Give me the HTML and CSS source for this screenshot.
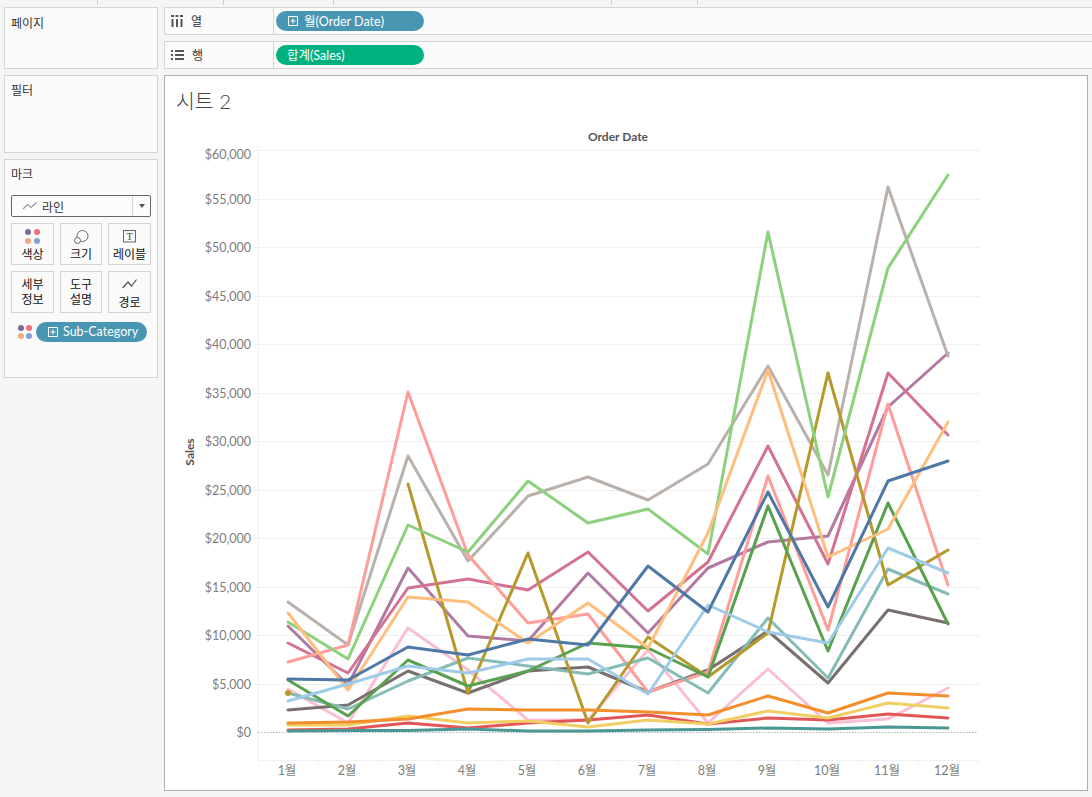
FILE: index.html
```html
<!DOCTYPE html>
<html lang="ko">
<head>
<meta charset="utf-8">
<title>시트 2</title>
<link rel="stylesheet" href="styles.css">
</head>
<body>
<div class="topstrip">
  <i class="t1"></i><i class="t2"></i><i class="t3"></i><i class="t4"></i><i class="t5"></i>
</div>
<div class="app">
  <aside class="side">
    <section class="card pages"><h2>페이지</h2></section>
    <section class="card filters"><h2>필터</h2></section>
    <section class="card marks">
      <h2>마크</h2>
      <div class="dropdown">
        <div class="dd-main">
          <svg class="dd-icon" width="16" height="10" viewBox="0 0 16 10"><path d="M1 8 L5.500 3.500 L9 6.500 L14.500 1.500"/></svg>
          <span>라인</span>
        </div>
        <div class="dd-arrow"><b></b></div>
      </div>
      <div class="tiles">
        <div class="tile">
          <svg class="tile-icon" width="18" height="18" viewBox="0 0 18 18">
            <circle class="d1" cx="4" cy="4" r="3"/><circle class="d2" cx="13" cy="4" r="3"/>
            <circle class="d3" cx="4" cy="13" r="3"/><circle class="d4" cx="13" cy="13" r="3"/>
          </svg>
          <span>색상</span>
        </div>
        <div class="tile">
          <svg class="tile-icon line" width="18" height="18" viewBox="0 0 18 18">
            <circle cx="10.500" cy="8" r="5.500"/><circle class="small" cx="5.500" cy="12.500" r="3"/>
          </svg>
          <span>크기</span>
        </div>
        <div class="tile">
          <svg class="tile-icon line" width="18" height="18" viewBox="0 0 18 18">
            <rect x="2.500" y="2.500" width="12" height="11.500"/>
            <text class="t-glyph" x="8.500" y="12" text-anchor="middle">T</text>
          </svg>
          <span>레이블</span>
        </div>
        <div class="tile two"><span>세부<br>정보</span></div>
        <div class="tile two"><span>도구<br>설명</span></div>
        <div class="tile">
          <svg class="tile-icon path" width="18" height="18" viewBox="0 0 18 18"><path d="M1.500 12 L7 6 L10.500 10 L15.500 3.500"/></svg>
          <span>경로</span>
        </div>
      </div>
      <div class="color-row">
        <svg class="row-dots" width="14" height="14" viewBox="0 0 14 14">
          <circle class="d1" cx="3" cy="3" r="3"/><circle class="d2" cx="11" cy="3" r="3"/>
          <circle class="d3" cx="3" cy="11" r="3"/><circle class="d4" cx="11" cy="11" r="3"/>
        </svg>
        <div class="pill blue wide">
          <svg class="plus" width="11" height="11" viewBox="0 0 11 11"><path d="M.5 .5H9.500V9.500H.5Z M5 2.500V7.500 M2.500 5H7.500"/></svg>
          <span>Sub-Category</span>
        </div>
      </div>
    </section>
  </aside>
  <main class="content">
    <div class="shelf">
      <div class="shelf-head">
        <svg class="shelf-icon" width="12" height="12" viewBox="0 0 12 12"><path d="M0 0H3V2H0Z M4.500 0H7.500V2H4.500Z M9 0H12V2H9Z M.5 4H2.500V12H.5Z M5 4H7V12H5Z M9.500 4H11.500V12H9.500Z"/></svg>
        <span>열</span>
      </div>
      <div class="pill blue">
        <svg class="plus" width="11" height="11" viewBox="0 0 11 11"><path d="M.5 .5H9.500V9.500H.5Z M5 2.500V7.500 M2.500 5H7.500"/></svg>
        <span>월(Order Date)</span>
      </div>
    </div>
    <div class="shelf">
      <div class="shelf-head">
        <svg class="shelf-icon" width="13" height="12" viewBox="0 0 13 12"><path d="M0 1H2V3H0Z M4 1H13V3H4Z M0 5H2V7H0Z M4 5H13V7H4Z M0 9H2V11H0Z M4 9H13V11H4Z"/></svg>
        <span>행</span>
      </div>
      <div class="pill green"><span>합계(Sales)</span></div>
    </div>
    <section class="viz">
      <h1>시트 2</h1>
      <svg class="chart" width="922" height="664" viewBox="165 126 922 664">
        <g class="grid">
          <path d="M258 146V760 M254 150.500H980 M254 199.500H980 M254 247.500H980 M254 296.500H980 M254 344.500H980 M254 393.500H980 M254 441.500H980 M254 490.500H980 M254 538.500H980 M254 587.500H980 M254 635.500H980 M254 684.500H980 M258 760.500H978 M258.500 760V764 M318.500 760V764 M378.500 760V764 M438.500 760V764 M498.500 760V764 M558.500 760V764 M618.500 760V764 M678.500 760V764 M738.500 760V764 M798.500 760V764 M858.500 760V764 M918.500 760V764 M978.500 760V764"/>
        </g>
        <path class="zero" d="M258 732.500H978"/>
        <text class="head" x="618" y="141" text-anchor="middle">Order Date</text>
        <text class="head" transform="translate(194 452) rotate(-90)" text-anchor="middle">Sales</text>
        <g class="yaxis" text-anchor="end">
          <text x="251" y="159">$60,000</text><text x="251" y="204">$55,000</text><text x="251" y="252">$50,000</text><text x="251" y="301">$45,000</text><text x="251" y="349">$40,000</text><text x="251" y="398">$35,000</text><text x="251" y="446">$30,000</text><text x="251" y="495">$25,000</text><text x="251" y="543">$20,000</text><text x="251" y="592">$15,000</text><text x="251" y="640">$10,000</text><text x="251" y="689">$5,000</text><text x="251" y="737">$0</text>
        </g>
        <g class="xaxis" text-anchor="middle">
          <text x="287" y="775">1월</text><text x="347" y="775">2월</text><text x="407" y="775">3월</text><text x="467" y="775">4월</text><text x="527" y="775">5월</text><text x="587" y="775">6월</text><text x="647" y="775">7월</text><text x="707" y="775">8월</text><text x="767" y="775">9월</text><text x="827" y="775">10월</text><text x="887" y="775">11월</text><text x="947" y="775">12월</text>
        </g>
        <g class="lines">
          <polyline class="s-purple" points="288,626 348,685 408,568 468,636 528,641 588,573 648,633 708,568 768,542 828,536 888,407 948,353"/>
          <polyline class="s-pink" points="288,689 348,723 408,628 468,670 528,720 588,720 648,650 708,723 768,669 828,723 888,719 948,688"/>
          <polyline class="s-rose" points="288,643 348,673 408,588 468,579 528,590 588,552 648,611 708,562 768,446 828,564 888,373 948,435"/>
          <polyline class="s-lgray" points="288,602 348,645 408,456 468,561 528,496 588,477 648,500 708,464 768,366 828,475 888,187 948,356"/>
          <polyline class="s-gray" points="288,710 348,705 408,671 468,693 528,671 588,667 648,692 708,670 768,631 828,683 888,610 948,623"/>
          <polyline class="s-lred" points="288,662 348,645 408,392 468,555 528,623 588,614 648,692 708,672 768,476 828,630 888,404 948,585"/>
          <polyline class="s-red" points="288,730 348,729 408,723 468,728 528,723 588,720 648,715 708,724 768,718 828,720 888,714 948,718"/>
          <polyline class="s-lteal" points="288,693 348,709 408,681 468,658 528,666 588,674 648,658 708,693 768,618 828,678 888,569 948,594"/>
          <polyline class="s-teal" points="288,731 348,730.500 408,730.500 468,729 528,731 588,731 648,730 708,729.500 768,728 828,729 888,727 948,728"/>
          <polyline class="s-yellow" points="288,725 348,725 408,716 468,723 528,721 588,727 648,720 708,724 768,711 828,718 888,703 948,708"/>
          <circle class="s-dot" cx="288" cy="693" r="3"/>
          <polyline class="s-olive" points="408,484 468,693 528,553 588,723 648,637 708,677 768,633 828,373 888,585 948,550"/>
          <polyline class="s-lgreen" points="288,622 348,659 408,525 468,552 528,481 588,523 648,509 708,554 768,232 828,497 888,268 948,175"/>
          <polyline class="s-green" points="288,680 348,716 408,660 468,686 528,671 588,643 648,648 708,677 768,506 828,651 888,503 948,624"/>
          <polyline class="s-lorange" points="288,613 348,690 408,597 468,602 528,643 588,603 648,648 708,533 768,370 828,557 888,529 948,422"/>
          <polyline class="s-orange" points="288,723 348,722 408,719 468,709 528,710 588,710 648,712 708,715 768,696 828,713 888,693 948,696"/>
          <polyline class="s-lblue" points="288,701 348,684 408,666 468,673 528,659 588,659 648,694 708,605 768,632 828,643 888,548 948,573"/>
          <polyline class="s-blue" points="288,679 348,680 408,647 468,655 528,639 588,645 648,566 708,612 768,492 828,607 888,481 948,461"/>
        </g>
      </svg>
    </section>
  </main>
</div>
</body>
</html>
```

FILE: styles.css
```css
* { box-sizing: border-box; }
html, body { margin: 0; padding: 0; }
body {
  width: 1092px;
  height: 797px;
  overflow: hidden;
  background: #f5f5f5;
  color: #333;
  font-family: "Lato", "Noto Sans CJK KR", sans-serif;
  font-size: 12px;
}
.topstrip { height: 7px; display: flex; }
.topstrip i { display: block; width: 1px; height: 5px; background: #cfcfcf; }
.t1 { margin-left: 97px; }
.t2 { margin-left: 125px; }
.t3 { margin-left: 109px; }
.t4 { margin-left: 277px; }
.t5 { margin-left: 85px; }

.app { display: flex; gap: 6px; padding-left: 4px; }
.side { width: 154px; display: flex; flex-direction: column; gap: 6px; }
.card {
  background: #fafafa;
  border: 1px solid #d4d4d4;
  padding: 7px 6px;
}
.card h2 { margin: 0; font-size: 12px; font-weight: 400; line-height: 16px; color: #333; }
.pages h2 { padding-top: 1px; }
.pages { height: 62px; }
.filters { height: 78px; }
.marks { height: 219px; }

.dropdown {
  display: flex;
  height: 22px;
  margin-top: 12px;
  border: 1px solid #666;
  border-radius: 2px;
  background: #fcfcfc;
}
.dd-main { flex: 1; display: flex; align-items: center; gap: 4px; padding-left: 10px; font-size: 12px; }
.dd-icon path { fill: none; stroke: #999; stroke-width: 1.2; }
.dd-arrow { width: 18px; border-left: 1px solid #d4d4d4; display: flex; align-items: center; justify-content: center; }
.dd-arrow b { width: 0; height: 0; border-left: 3.500px solid transparent; border-right: 3.500px solid transparent; border-top: 4px solid #555; }

.tiles { display: grid; grid-template-columns: 43px 42px 43px; grid-auto-rows: 42px; column-gap: 6px; row-gap: 6px; margin-top: 6px; }
.tile {
  border: 1px solid #d4d4d4;
  display: flex;
  flex-direction: column;
  align-items: center;
  justify-content: flex-end;
  padding-bottom: 2px;
  font-size: 12px;
  line-height: 15px;
  color: #111;
  text-align: center;
  background: #fafafa;
}
.tile.two { justify-content: center; padding-bottom: 0; }
.tile-icon { margin-bottom: 1px; }
.d1 { fill: #7a6a97; }
.d2 { fill: #ec6d7f; }
.d3 { fill: #f2a97c; }
.d4 { fill: #7fa3ce; }
.tile-icon.line circle, .tile-icon.line rect { fill: none; stroke: #666; stroke-width: 1; }
.tile-icon.line .small { fill: #fafafa; }
.tile-icon.path path { fill: none; stroke: #555; stroke-width: 1.2; }
.t-glyph { font-family: "Liberation Serif", serif; font-size: 10px; font-weight: 400; fill: #444; }

.color-row { display: flex; align-items: center; gap: 4px; margin-top: 9px; }
.row-dots { margin-left: 7px; flex: none; }

.pill {
  display: flex;
  align-items: center;
  height: 20px;
  width: 148px;
  border-radius: 10px;
  color: #fff;
  font-size: 12.500px;
  padding: 0 0 1px 11px;
  margin-left: 2px;
}
.pill .plus { flex: none; margin: 1px 5px 0 1px; }
.plus path { fill: none; stroke: #fff; stroke-width: 1; }
.blue { background: #4996b2; }
.green { background: #00b180; }
.pill.wide { width: 111px; margin-left: 0; }
.pill.wide .plus { margin-right: 4px; }

.content { width: 928px; display: flex; flex-direction: column; gap: 6px; }
.shelf {
  height: 28px;
  display: flex;
  align-items: center;
  background: #fafafa;
  border: 1px solid #d4d4d4;
  border-right: 0;
}
.shelf-head {
  width: 109px;
  height: 100%;
  display: flex;
  align-items: center;
  gap: 8px;
  padding: 0 0 1px 6px;
  border-right: 1px solid #d4d4d4;
  font-size: 12px;
  color: #333;
}
.shelf-icon path { fill: #555; }

.viz {
  width: 924px;
  height: 716px;
  background: #fff;
  border: 1px solid #b0b0b0;
}
.viz h1 {
  margin: 0;
  height: 50px;
  padding: 10px 0 0 11px;
  font-size: 20.500px;
  font-weight: 300;
  line-height: 30px;
  color: #444;
}
.chart { display: block; }
.grid path { fill: none; stroke: #f0f0f0; stroke-width: 1; }
.zero { fill: none; stroke: #b5b5b5; stroke-width: 1; stroke-dasharray: 1.500 1.500; }
.chart text { font-family: "Lato", "Noto Sans CJK KR", sans-serif; }
.head { font-size: 12px; font-weight: 700; fill: #555; }
.yaxis text, .xaxis text { font-size: 12.500px; fill: #7d7d7d; }
.lines polyline { fill: none; stroke-width: 3; stroke-linecap: round; stroke-linejoin: round; }
.s-blue { stroke: #4e79a7; }
.s-lblue { stroke: #a0cbe8; }
.s-orange { stroke: #f28e2b; }
.s-lorange { stroke: #ffbe7d; }
.s-green { stroke: #59a14f; }
.s-lgreen { stroke: #8cd17d; }
.s-olive { stroke: #b6992d; }
.s-yellow { stroke: #f1ce63; }
.s-teal { stroke: #499894; }
.s-lteal { stroke: #86bcb6; }
.s-red { stroke: #e15759; }
.s-lred { stroke: #ff9d9a; }
.s-gray { stroke: #79706e; }
.s-lgray { stroke: #bab0ac; }
.s-rose { stroke: #d37295; }
.s-pink { stroke: #fabfd2; }
.s-purple { stroke: #b07aa1; }
.s-dot { fill: #b6992d; }
```
